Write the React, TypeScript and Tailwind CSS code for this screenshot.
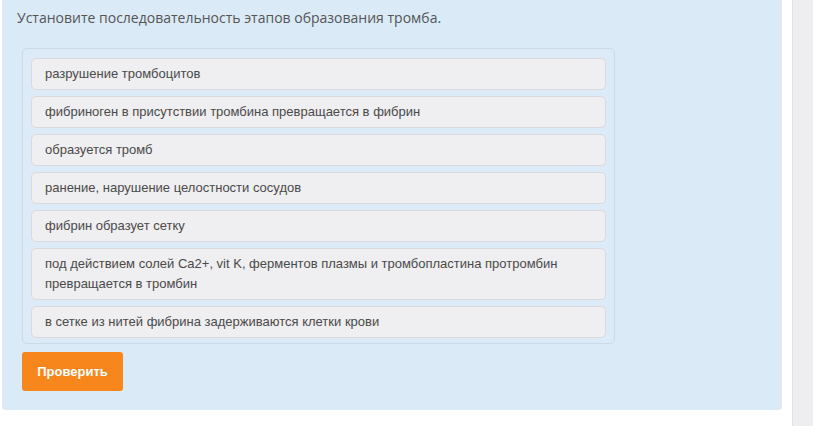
import React from 'react';

const steps = [
  'разрушение тромбоцитов',
  'фибриноген в присутствии тромбина превращается в фибрин',
  'образуется тромб',
  'ранение, нарушение целостности сосудов',
  'фибрин образует сетку',
  'под действием солей Ca2+, vit K, ферментов плазмы и тромбопластина протромбин превращается в тромбин',
  'в сетке из нитей фибрина задерживаются клетки крови',
];

export default function App() {
  return (
    <div className="flex h-[426px] w-[813px] overflow-hidden bg-white">
      <div className="ml-[2px] mt-0 w-[780px] self-start rounded-b-[4px] bg-[#daeaf7] pb-[19px]">
        <div
          className="px-[15px] pt-[8px] text-[14px] leading-[19px] text-[#555]"
          style={{ fontFamily: '"Open Sans", sans-serif' }}
        >
          Установите последовательность этапов образования тромба.
        </div>
        <div className="px-[20px] pt-[21px]">
          <div className="flex w-[593px] flex-col gap-[6px] rounded-[5px] border border-[#c9dbe9] bg-[#dcebf7] px-[8px] pb-[5px] pt-[9px]">
            {steps.map((s, i) => (
              <div
                key={i}
                className="rounded-[5px] border border-[#d9d9de] bg-[#efeef0] py-[5px] pl-[13px] pr-[10px] text-[13px] leading-[20px] text-[#4a4a4a]"
                style={{ fontFamily: '"Liberation Sans", Arial, sans-serif' }}
              >
                {s}
              </div>
            ))}
          </div>
          <button
            className="mt-[8px] h-[39px] w-[101px] rounded-[3px] bg-[#f7861c] text-[13px] font-bold text-white"
            style={{ fontFamily: '"Liberation Sans", Arial, sans-serif' }}
          >
            Проверить
          </button>
        </div>
      </div>
      <div className="ml-[10px] h-full w-[21px] border-l border-[#e2e2e6] bg-[#eeeef1]" />
    </div>
  );
}
